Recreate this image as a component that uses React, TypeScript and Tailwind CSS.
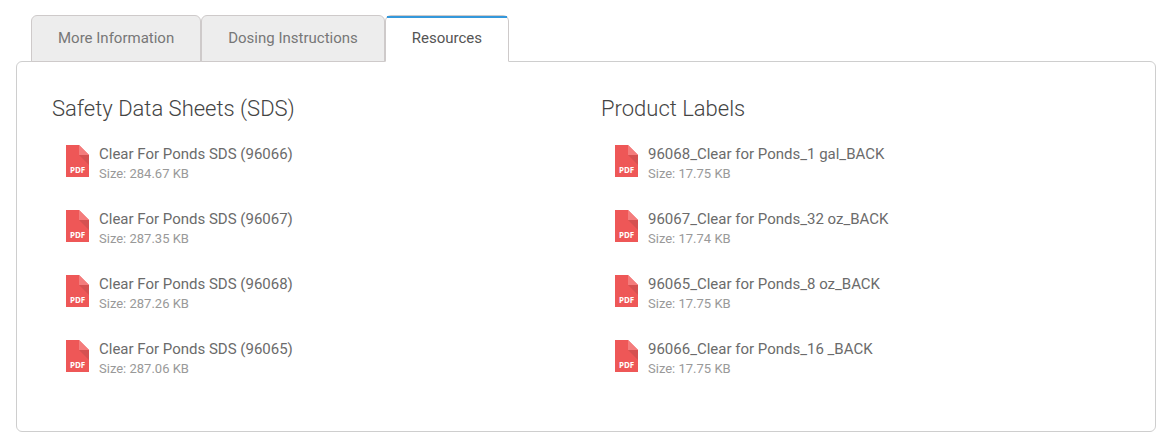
import React, { useState } from 'react';

interface ResourceFile {
    name: string;
    size: string;
}

interface ResourceGroup {
    title: string;
    files: ResourceFile[];
}

const tabs = ['More Information', 'Dosing Instructions', 'Resources'];

const groups: ResourceGroup[] = [
    {
        title: 'Safety Data Sheets (SDS)',
        files: [
            { name: 'Clear For Ponds SDS (96066)', size: '284.67 KB' },
            { name: 'Clear For Ponds SDS (96067)', size: '287.35 KB' },
            { name: 'Clear For Ponds SDS (96068)', size: '287.26 KB' },
            { name: 'Clear For Ponds SDS (96065)', size: '287.06 KB' },
        ],
    },
    {
        title: 'Product Labels',
        files: [
            { name: '96068_Clear for Ponds_1 gal_BACK', size: '17.75 KB' },
            { name: '96067_Clear for Ponds_32 oz_BACK', size: '17.74 KB' },
            { name: '96065_Clear for Ponds_8 oz_BACK', size: '17.75 KB' },
            { name: '96066_Clear for Ponds_16 _BACK', size: '17.75 KB' },
        ],
    },
];

function PdfIcon() {
    return (
        <svg className="mt-px h-8 w-[23px] shrink-0" viewBox="0 0 23 32" aria-hidden="true">
            <path d="M0 0H13L23 10V32H0Z" fill="#ee5757" />
            <path d="M13 10H23V20Z" fill="#d55151" />
            <path d="M13 0L23 10H13Z" fill="#f47c7c" />
            <text x="4" y="28" fontSize="8" fontWeight="700" fontFamily="Noto Sans, sans-serif" fill="#fff">PDF</text>
        </svg>
    );
}

export default function App() {
    const [active, setActive] = useState('Resources');

    return (
        <div className="bg-white pt-[15px] pr-5 pb-2 pl-4 font-['Roboto',sans-serif]">
            {/* Tabs */}
            <div role="tablist" className="relative flex pl-[15px]">
                {tabs.map((tab) => (
                    <button
                        key={tab}
                        role="tab"
                        aria-selected={tab === active}
                        onClick={() => setActive(tab)}
                        className={`relative -mb-px h-[47px] rounded-t-md border border-[#cecaca] px-[26px] pb-0.5 text-[15px] leading-5
                            ${tab === active ? 'border-b-white bg-white text-[#555]' : 'bg-[#ededed] text-[#777]'}`}
                    >
                        {tab === active && <span className="absolute inset-x-px top-0 h-0.5 bg-[#3498db]" />}
                        {tab}
                    </button>
                ))}
            </div>

            {/* Panel */}
            <div role="tabpanel" className="grid grid-cols-2 rounded-md border border-[#cecece] px-5 pt-8 pb-[27px]">
                {groups.map((group) => (
                    <section key={group.title} className="px-[15px]">
                        <h2 className="text-[22px] leading-[30px] font-light text-[#444]">{group.title}</h2>
                        <ul className="pt-5 pl-[14px]">
                            {group.files.map((file) => (
                                <li key={file.name} className="h-[65px]">
                                    <a href="#" className="flex items-start gap-[10px]">
                                        <PdfIcon />
                                        <span className="flex flex-col">
                                            <span className="text-[15px] leading-5 text-[#6b6b6b]">{file.name}</span>
                                            <span className="text-[13px] leading-5 text-[#999]">Size: {file.size}</span>
                                        </span>
                                    </a>
                                </li>
                            ))}
                        </ul>
                    </section>
                ))}
            </div>
        </div>
    );
}
